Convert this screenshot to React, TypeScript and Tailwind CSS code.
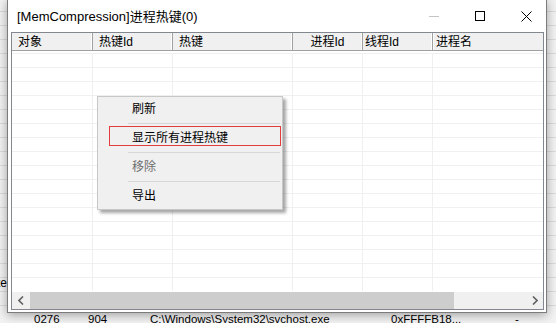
import React from "react";

const cols = [
  { w: 81, label: "对象", cls: "pl-[6px] justify-start" },
  { w: 80, label: "热键Id", cls: "pl-[6px] justify-start" },
  { w: 120, label: "热键", cls: "pl-[6px] justify-start" },
  { w: 70, label: "进程Id", cls: "justify-center" },
  { w: 70, label: "线程Id", cls: "pl-[2px] justify-start" },
];

function BgRows() {
  const rows = Array.from({ length: 21 });
  return (
    <div className="absolute inset-0 flex flex-col pt-[11px] bg-[#f3f3f3] font-['Liberation_Sans','Noto_Sans_CJK_SC',sans-serif] text-[12px] text-black">
      {rows.map((_, i) => (
        <div key={i} className="h-[14px] shrink-0 border-t border-[#dcdcdc] flex items-center overflow-hidden">
          {i === 19 ? <span className="ml-[-3px] leading-none mt-[-3px]">te</span> : null}
        </div>
      ))}
      <div className="h-[30px] shrink-0 border-t border-[#dcdcdc] flex items-start pt-[6px] leading-[14px] whitespace-nowrap text-[11.5px]">
        <span className="w-[34px] shrink-0" />
        <span className="w-[54px] shrink-0">0276</span>
        <span className="w-[62px] shrink-0">904</span>
        <span className="w-[241px] shrink-0">C:\Windows\System32\svchost.exe</span>
        <span className="w-[124px] shrink-0">0xFFFFB18...</span>
        <span>-</span>
      </div>
    </div>
  );
}

function TitleButtons() {
  return (
    <div className="flex h-full -mr-[3px]">
      <div className="w-[46px] h-full flex items-center justify-center">
        <svg width="10" height="10" viewBox="0 0 10 10">
          <line x1="0" y1="5.5" x2="10" y2="5.5" stroke="#c4c4c4" strokeWidth="1" />
        </svg>
      </div>
      <div className="w-[46px] h-full flex items-center justify-center">
        <svg width="10" height="10" viewBox="0 0 10 10">
          <rect x="0.5" y="0.5" width="9" height="9" fill="none" stroke="#000" strokeWidth="1" />
        </svg>
      </div>
      <div className="w-[46px] h-full flex items-center justify-center">
        <svg width="11" height="11" viewBox="0 0 11 11">
          <path d="M0.5 0.5 L10.5 10.5 M10.5 0.5 L0.5 10.5" stroke="#000" strokeWidth="1" fill="none" />
        </svg>
      </div>
    </div>
  );
}

function Header() {
  return (
    <div className="h-[18px] shrink-0 flex bg-[#f0f0f0] border-b border-[#a0a0a0] text-[12px] text-black leading-none">
      {cols.map((c, i) => (
        <div
          key={i}
          style={{ width: c.w }}
          className={`shrink-0 flex items-center border-r border-[#a0a0a0] shadow-[inset_-1px_0_0_#ffffff] ${c.cls}`}
        >
          {c.label}
        </div>
      ))}
      <div className="flex-1 flex items-center pl-[2px] border-l border-white">进程名</div>
    </div>
  );
}

function Body() {
  const rows = Array.from({ length: 17 });
  return (
    <div className="flex-1 relative bg-white overflow-hidden pt-[2px]">
      {rows.map((_, i) => (
        <div key={i} className="h-[14px] flex border-t border-[#f0f0f0]">
          {cols.map((c, j) => (
            <div key={j} style={{ width: c.w }} className="shrink-0 border-r border-[#f0f0f0]" />
          ))}
          <div className="flex-1" />
        </div>
      ))}
    </div>
  );
}

function HScroll() {
  return (
    <div className="h-[17px] shrink-0 flex bg-[#f0f0f0]">
      <div className="w-[17px] h-full flex items-center justify-center">
        <svg width="6" height="9" viewBox="0 0 6 9">
          <path d="M5 0.5 L1 4.5 L5 8.5" stroke="#606060" strokeWidth="1.6" fill="none" />
        </svg>
      </div>
      <div className="flex-1 flex items-stretch py-0">
        <div className="ml-[1px] w-[424px] bg-[#cdcdcd]" />
      </div>
      <div className="w-[17px] h-full flex items-center justify-center">
        <svg width="6" height="9" viewBox="0 0 6 9">
          <path d="M1 0.5 L5 4.5 L1 8.5" stroke="#606060" strokeWidth="1.6" fill="none" />
        </svg>
      </div>
    </div>
  );
}

function Sep() {
  return (
    <div className="h-[7px] flex items-start pt-[3px] pl-[30px] pr-[2px]">
      <div className="h-[1px] w-full bg-[#d7d7d7]" />
    </div>
  );
}

function ContextMenu() {
  return (
    <div className="absolute left-[97px] top-[96px] w-[186px] bg-[#f0f0f0] border border-[#c8c8c8] shadow-[3px_3px_3px_rgba(0,0,0,0.35)] pt-[1px] pb-[2px] text-[12px] text-black font-['Liberation_Sans','Noto_Sans_CJK_SC',sans-serif]">
      <div className="h-[22px] flex items-center pl-[34px]">刷新</div>
      <Sep />
      <div className="h-[22px] flex items-center pl-[34px] relative">
        <div className="absolute left-[11px] right-[1px] top-[-1px] h-[20px] border border-[#e23c3c]" />
        显示所有进程热键
      </div>
      <Sep />
      <div className="h-[22px] flex items-center pl-[34px] text-[#6d6d6d]">移除</div>
      <Sep />
      <div className="h-[22px] flex items-center pl-[34px]">导出</div>
    </div>
  );
}

export default function App() {
  return (
    <div className="relative w-[556px] h-[323px] overflow-hidden font-['Liberation_Sans','Noto_Sans_CJK_SC',sans-serif]">
      <BgRows />
      <div className="absolute left-[7px] top-[-1px] w-[540px] h-[314px] border border-[#7c7c7c] bg-white shadow-[0_2px_10px_rgba(0,0,0,0.35)] flex flex-col">
        <div className="h-[32px] shrink-0 flex items-center justify-between bg-white">
          <div className="pl-[9px] text-[13px] text-black pt-[1px]">[MemCompression]进程热键(0)</div>
          <TitleButtons />
        </div>
        <div className="ml-[3px] w-[533px] h-[278px] border border-[#828790] flex flex-col">
          <Header />
          <Body />
          <HScroll />
        </div>
      </div>
      <ContextMenu />
    </div>
  );
}
